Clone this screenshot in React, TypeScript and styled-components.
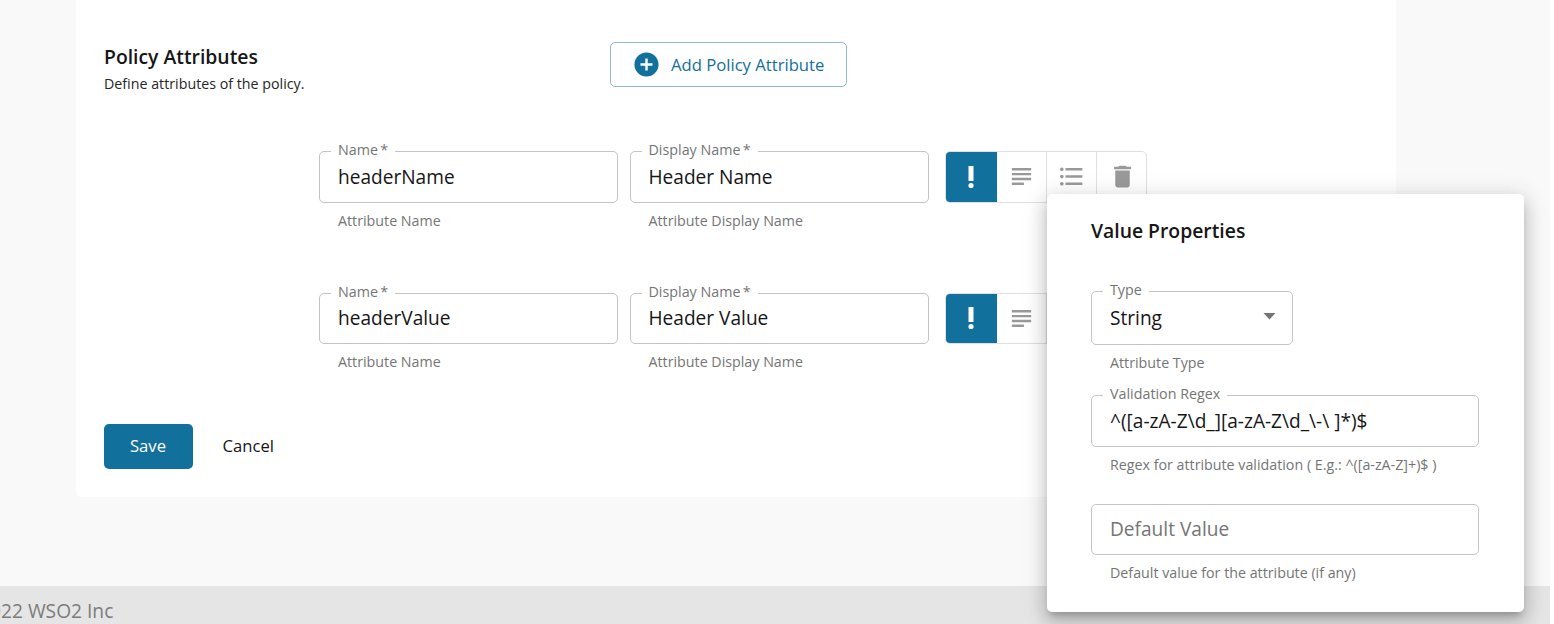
import React from 'react';
import styled, { createGlobalStyle } from 'styled-components';

const Global = createGlobalStyle`
  * { box-sizing: border-box; }
  body { margin: 0; background: #fff; font-family: "Open Sans", "Noto Sans", sans-serif; color: #161616; }
`;
const Page = styled.div`
  position: relative; width: 1550px; height: 624px; overflow: hidden;
  background: #f9f9f9; display: flex; flex-direction: column;
`;
const Card = styled.main`
  width: 1320px; height: 497px; margin-left: 76px; flex: none;
  background: #fff; border-radius: 0 0 5px 5px; padding: 42px 28px 28px;
  display: flex; flex-direction: column;
`;
const Header = styled.div`display: flex; height: 109px; align-items: flex-start;`;
const Intro = styled.div`width: 506px; padding-top: 1px;`;
const Title = styled.h2`margin: 0; font-size: 19.35px; line-height: 28px; font-weight: 600; color: #161616; white-space: nowrap;`;
const Caption = styled.p`margin: 2px 0 0; font-size: 14.25px; line-height: 22px; color: #262626; white-space: nowrap;`;
const AddButton = styled.button`
  width: 237px; height: 45px; border: 1px solid #8fb9d0; border-radius: 5px; background: #fff;
  padding: 0 0 0 21px; display: flex; align-items: center; gap: 10px;
  font: 400 16.65px "Open Sans", sans-serif; color: #11709c; white-space: nowrap;
`;
const Row = styled.div`display: flex; height: 141.500px; margin-left: 215px; align-items: flex-start;`;
const Field = styled.div<{ $w: number; $gap?: number }>`width: ${p => p.$w}px; margin-right: ${p => p.$gap || 0}px; flex: none;`;
const Box = styled.div<{ $h?: number }>`
  position: relative; height: ${p => p.$h || 51.5}px; border: 1px solid #c4c4c4; border-radius: 5px;
  padding: 0 16px 0 18px; display: flex; align-items: center; justify-content: space-between;
`;
const Label = styled.label`
  position: absolute; top: -13px; left: 11px; padding: 0 7px; background: #fff;
  font-size: 14.3px; line-height: 22px; color: #757575; white-space: nowrap;
`;
const Value = styled.span<{ $muted?: boolean }>`font-size: 19.1px; line-height: 28px; white-space: pre; color: ${p => (p.$muted ? '#757575' : '#161616')};`;
const Help = styled.p`margin: 7px 0 0 19px; font-size: 14.25px; line-height: 22px; color: #757575; white-space: nowrap;`;
const Tools = styled.div`display: flex; width: 202.500px; height: 51.500px; border: 1px solid #e0e0e0; border-radius: 5px; overflow: hidden;`;
const Tool = styled.button<{ $on?: boolean }>`
  flex: none; width: ${p => (p.$on ? 52 : 50.4)}px; height: 52px; padding: 0 0 1px; border: 0;
  margin: ${p => (p.$on ? '-1px 0 0 -1px' : '-1px 0 0')};
  border-right: ${p => (p.$on ? '0' : '1px solid #e0e0e0')};
  background: ${p => (p.$on ? '#11709c' : 'transparent')}; color: ${p => (p.$on ? '#fff' : '#999')};
  display: flex; align-items: center; justify-content: center;
  &:last-child { border-right: 0; }
`;
const Actions = styled.div`display: flex; gap: 29.500px; margin-top: -10px;`;
const Save = styled.button`
  width: 89px; height: 45px; border: 0; border-radius: 5px; background: #11709c; color: #fff;
  font: 500 16.65px "Open Sans", sans-serif; padding: 0 1px 2px 0;
`;
const Cancel = styled.button`border: 0; padding: 0 0 2px; background: none; color: #161616; font: 400 16.65px "Open Sans", sans-serif;`;
const Footer = styled.footer`
  margin-top: auto; height: 38px; background: #e5e5e5; color: #7c7c7c;
  font-size: 19.2px; line-height: 49px; white-space: nowrap;
`;
const FooterText = styled.span`margin-left: -10px;`;
const Popover = styled.section`
  position: absolute; left: 1046.500px; top: 193.500px; width: 477px; height: 418px; background: #fff;
  border-radius: 5px; padding: 23.500px 44.500px;
  box-shadow: 0 6px 6px -3px rgba(0,0,0,.2), 0 10px 17px 1px rgba(0,0,0,.14), 0 4px 22px 4px rgba(0,0,0,.12);
`;
const PopForm = styled.div`padding-top: 46px; display: flex; flex-direction: column;`;
const Spacer = styled.div<{ $h: number }>`height: ${p => p.$h}px;`;

const Icon = ({ d, size = 29 }: { d: string; size?: number }) => (
  <svg width={size} height={size} viewBox="0 0 24 24" fill="currentColor"><path d={d} /></svg>
);
const ADD = 'M12 2C6.48 2 2 6.48 2 12s4.48 10 10 10 10-4.48 10-10S17.52 2 12 2zm5 11h-4v4h-2v-4H7v-2h4V7h2v4h4v2z';
const TRASH = 'M6 19c0 1.1.9 2 2 2h8c1.1 0 2-.9 2-2V7H6v12zM19 4h-3.500l-1-1h-5l-1 1H5v2h14V4z';
const LIST = 'M4 10.500c-.83 0-1.500.67-1.500 1.500s.67 1.500 1.500 1.500 1.500-.67 1.500-1.500-.67-1.500-1.500-1.500zm0-6c-.83 0-1.500.67-1.500 1.500S3.170 7.500 4 7.500 5.500 6.830 5.500 6 4.830 4.500 4 4.500zm0 12c-.83 0-1.500.68-1.500 1.500s.68 1.500 1.500 1.500 1.500-.68 1.500-1.500-.67-1.500-1.500-1.500zM7 19h14v-2H7v2zm0-6h14v-2H7v2zm0-8v2h14V5H7z';
const SUBJECT = 'M14 17H4v2h10v-2zm6-8H4v2h16V9zM4 15h16v-2H4v2zM4 5v2h16V5H4z';

function TextField({ label, value, help, w, gap, h, placeholder, select }: {
  label?: string; value: string; help: string; w: number; gap?: number; h?: number; placeholder?: boolean; select?: boolean;
}) {
  return (
    <Field $w={w} $gap={gap}>
      <Box $h={h}>
        {label && <Label>{label}</Label>}
        <Value $muted={placeholder}>{value}</Value>
        {select && <svg width="13" height="10" viewBox="0 0 13 10"><path d="M0.500 0h12L6.500 6.500z" fill="#757575" /></svg>}
      </Box>
      <Help>{help}</Help>
    </Field>
  );
}

function AttributeRow({ name, display }: { name: string; display: string }) {
  return (
    <Row>
      <TextField label={'Name\u2009*'} value={name} help="Attribute Name" w={299} gap={11.5} />
      <TextField label={'Display Name\u2009*'} value={display} help="Attribute Display Name" w={299} gap={16} />
      <Tools>
        <Tool $on>
          <svg width="8" height="24" viewBox="0 0 8 24" fill="#fff"><path d="M1.500 1h5v15h-5z" /><circle cx="4" cy="20.500" r="2.600" /></svg>
        </Tool>
        <Tool><Icon d={SUBJECT} /></Tool>
        <Tool><Icon d={LIST} /></Tool>
        <Tool><Icon d={TRASH} /></Tool>
      </Tools>
    </Row>
  );
}

export default function App() {
  return (
    <Page>
      <Global />
      <Card>
        <Header>
          <Intro>
            <Title>Policy Attributes</Title>
            <Caption>Define attributes of the policy.</Caption>
          </Intro>
          <AddButton><Icon d={ADD} />Add Policy Attribute</AddButton>
        </Header>
        <AttributeRow name="headerName" display="Header Name" />
        <AttributeRow name="headerValue" display="Header Value" />
        <Actions><Save>Save</Save><Cancel>Cancel</Cancel></Actions>
      </Card>
      <Footer><FooterText>022 WSO2 Inc</FooterText></Footer>
      <Popover>
        <Title>Value Properties</Title>
        <PopForm>
          <TextField label="Type" value="String" help="Attribute Type" w={202} h={54} select />
          <Spacer $h={21} />
          <TextField label="Validation Regex" value={'^([a-zA-Z\\d_][a-zA-Z\\d_\\-\\ ]*)$'} help="Regex for attribute validation ( E.g.: ^([a-zA-Z]+)$ )" w={388} />
          <Spacer $h={28} />
          <TextField value="Default Value" placeholder help="Default value for the attribute (if any)" w={388} />
        </PopForm>
      </Popover>
    </Page>
  );
}
